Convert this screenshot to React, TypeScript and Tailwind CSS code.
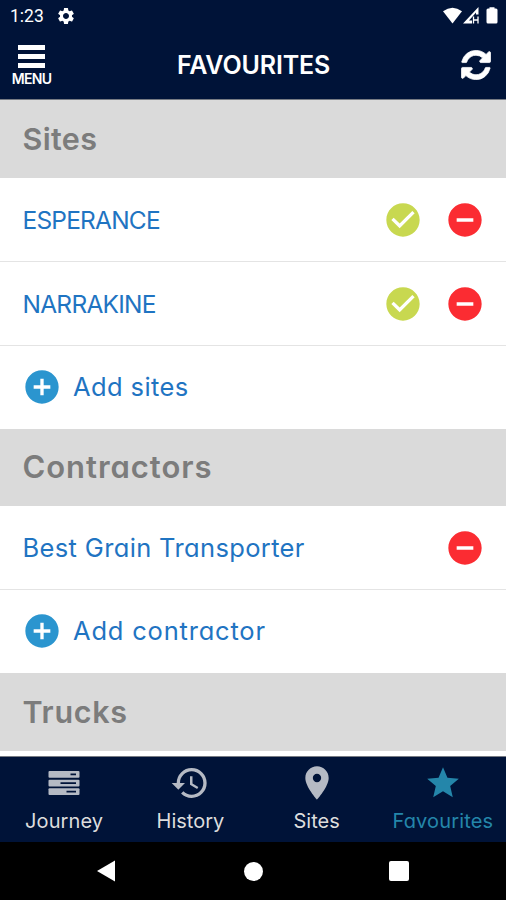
import React from "react";
import { MdSettings, MdHistory, MdLocationOn, MdStar, MdCheckCircle, MdRemoveCircle, MdAddCircle } from "react-icons/md";

function StatusBar() {
  return (
    <div className="flex h-8 items-center justify-between pl-[10px] pr-[6px] text-white">
      <div className="flex items-center">
        <span className="w-[35px] whitespace-nowrap font-['Roboto',sans-serif] text-[17.5px] leading-8">1:23</span>
        <MdSettings className="ml-[11px] size-[20px]" />
      </div>
      <svg className="mb-px h-[18px] w-[57px]" viewBox="0 0 57 18" fill="currentColor">
        <path d="M0 4.3Q9.500-2.800 19 4.300L9.500 16.500Z" />
        <path d="M20 16.500 35.500 0V7.500H33V5.500L26 13.500H29V16.500Z" />
        <path d="M30.500 9.500V16.500M35 9.500V16.500M30.500 13H35" stroke="currentColor" strokeWidth="1.3" />
        <path d="M46.500 1.500V.3H51.500V1.500H53Q54.500 1.500 54.500 3V15Q54.500 16.500 53 16.500H45Q43.500 16.500 43.500 15V3Q43.500 1.500 45 1.500Z" />
      </svg>
    </div>
  );
}

function Header() {
  return (
    <header className="flex h-[67px] items-start justify-between pl-3 pr-[15px] text-white">
      <button className="flex w-[39px] flex-col items-center pt-[12.5px]">
        <span className="flex w-[27px] flex-col gap-1">
          <i className="h-[5px] bg-white" />
          <i className="h-[5px] bg-white" />
          <i className="h-[5px] bg-white" />
        </span>
        <span className="mt-[1px] text-[14px] leading-[20px] font-semibold tracking-[-0.7px]">MENU</span>
      </button>
      <h1 className="mr-[5px] text-[25px] leading-[66px] font-semibold tracking-[-0.15px]">FAVOURITES</h1>
      <svg className="mt-[18px] size-[30px]" viewBox="-20 -20 1576 1576" fill="currentColor" stroke="currentColor" strokeWidth="40">
        <path d="M1511 928q0 5-1 7-64 268-268 434.500t-478 166.500q-146 0-282.500-55t-243.500-157l-129 129q-19 19-45 19t-45-19-19-45v-448q0-26 19-45t45-19h448q26 0 45 19t19 45-19 45l-137 137q71 66 161 102t187 36q134 0 250-65t186-179q11-17 53-117 8-23 30-23h192q13 0 22.500 9.500t9.500 22.500zm25-800v448q0 26-19 45t-45 19h-448q-26 0-45-19t-19-45 19-45l138-138q-148-137-349-137-134 0-250 65t-186 179q-11 17-53 117-8 23-30 23h-199q-13 0-22.500-9.500t-9.500-22.500v-7q65-268 270-434.500t480-166.500q146 0 284 55.500t245 156.500l130-129q19-19 45-19t45 19 19 45z" />
      </svg>
    </header>
  );
}

function Section({ title, spacing, height = "h-[78px]" }: { title: string; spacing: string; height?: string }) {
  return (
    <h2 className={`flex shrink-0 items-center bg-[#dadada] pl-[22.5px] font-semibold text-[#7c7c7c] ${height} ${spacing}`}>
      {title}
    </h2>
  );
}

function Row({ name, spacing, checked }: { name: string; spacing: string; checked?: boolean }) {
  return (
    <div className="flex h-[84px] shrink-0 items-center border-b border-[#e4e4e4] bg-white pl-[22.5px] pr-[21px]">
      <span className={`grow whitespace-nowrap pt-px text-[#1f74c2] ${spacing}`}>{name}</span>
      {checked && <MdCheckCircle className="mr-[22px] size-[40px] text-[#c8d850]" />}
      <MdRemoveCircle className="size-[40px] text-[#fb2c32]" />
    </div>
  );
}

function AddRow({ name, spacing }: { name: string; spacing: string }) {
  return (
    <div className="flex h-[83px] shrink-0 items-center bg-white pb-px pl-[22px]">
      <MdAddCircle className="size-[40px] text-[#2b95cf]" />
      <span className={`ml-[11px] whitespace-nowrap text-[#1f74c2] ${spacing}`}>{name}</span>
    </div>
  );
}

function JourneyIcon() {
  return (
    <svg className="h-[24px] w-[32px]" viewBox="0 0 32 24">
      {[0, 8.7, 17.2].map((y) => (
        <rect key={y} x=".5" y={y} width="31" height="6.800" rx="1" fill="#b5bac4" />
      ))}
      <path d="M22.500 3.400h5.500M12.500 12.100h15.500M18.500 20.600h9.500" stroke="#001338" strokeWidth="1.700" />
    </svg>
  );
}

function Tab({ label, spacing, icon, active }: { label: string; spacing: string; icon: React.ReactNode; active?: boolean }) {
  return (
    <div className={`flex flex-1 flex-col items-center ${active ? "text-[#2486aa]" : "text-[#b5bac4]"}`}>
      <span className="flex h-[51px] items-center">{icon}</span>
      <span className={`mt-px text-[20px] leading-6 whitespace-nowrap ${spacing} ${active ? "" : "text-[#dddddd]"}`}>{label}</span>
    </div>
  );
}

export default function App() {
  return (
    <div className="flex h-[900px] w-[506px] flex-col overflow-hidden bg-white font-['Inter',sans-serif] [font-feature-settings:'cv11']">
      <div className="h-[100px] shrink-0 border-b border-[#777b83] bg-[#001338]">
        <StatusBar />
        <Header />
      </div>
      <main className="flex h-[656px] shrink-0 flex-col overflow-hidden">
        <Section title="Sites" spacing="text-[30.5px] tracking-[0.35px]" />
        <Row name="ESPERANCE" spacing="text-[24.5px] tracking-[-0.8px]" checked />
        <Row name="NARRAKINE" spacing="text-[24.5px] tracking-[-0.75px]" checked />
        <AddRow name="Add sites" spacing="text-[25.5px] tracking-[0.4px]" />
        <Section title="Contractors" spacing="text-[31px] tracking-[0.95px]" height="h-[77px]" />
        <Row name="Best Grain Transporter" spacing="text-[25.5px] tracking-[0.35px]" />
        <AddRow name="Add contractor" spacing="text-[25.5px] tracking-[0.8px]" />
        <Section title="Trucks" spacing="text-[30.5px] tracking-[0.7px]" />
      </main>
      <nav className="flex h-[86px] shrink-0 border-t border-[#777b83] bg-[#001338] pl-px">
        <Tab label="Journey" spacing="tracking-[0.1px]" icon={<JourneyIcon />} />
        <Tab label="History" spacing="tracking-[0px]" icon={<MdHistory className="size-[40px]" />} />
        <Tab label="Sites" spacing="tracking-[0px]" icon={<MdLocationOn className="size-[40px]" />} />
        <Tab label="Favourites" spacing="tracking-[0.15px]" icon={<MdStar className="size-[38px]" />} active />
      </nav>
      <div className="flex h-[58px] shrink-0 items-center justify-between bg-black px-[97px]">
        <svg className="h-[22px] w-[18px]" viewBox="0 0 18 22" fill="white"><path d="M0 11 18 .5v21z" /></svg>
        <i className="ml-0.5 size-[19px] rounded-full bg-white" />
        <i className="size-[20px] rounded-[2px] bg-white" />
      </div>
    </div>
  );
}
